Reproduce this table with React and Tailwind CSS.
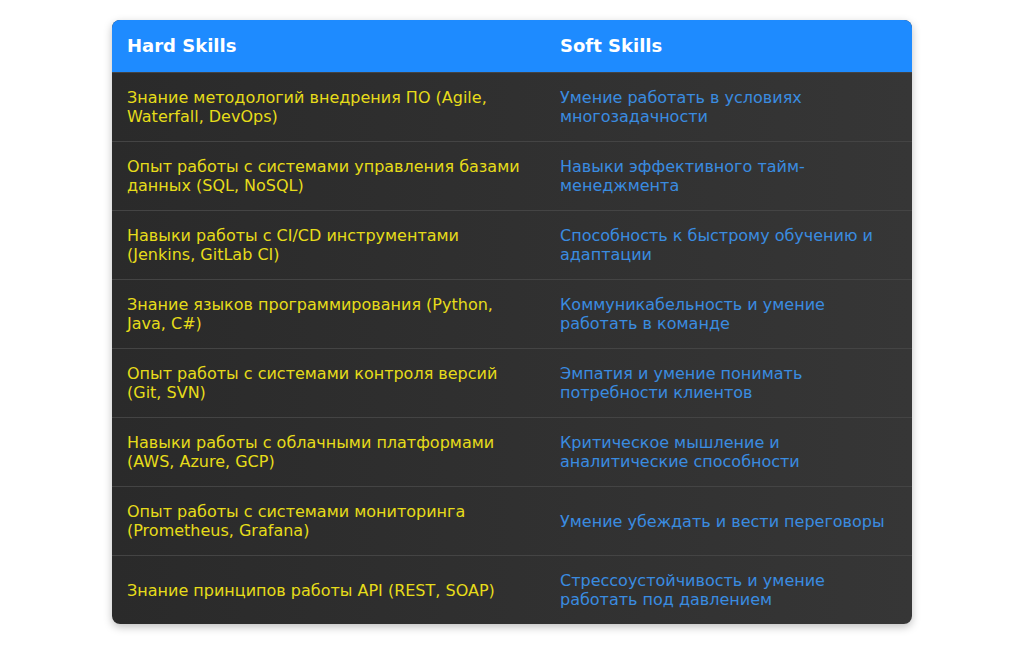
import React from "react";

const rows = [
  ["Знание методологий внедрения ПО (Agile, Waterfall, DevOps)", "Умение работать в условиях многозадачности"],
  ["Опыт работы с системами управления базами данных (SQL, NoSQL)", "Навыки эффективного тайм-менеджмента"],
  ["Навыки работы с CI/CD инструментами (Jenkins, GitLab CI)", "Способность к быстрому обучению и адаптации"],
  ["Знание языков программирования (Python, Java, C#)", "Коммуникабельность и умение работать в команде"],
  ["Опыт работы с системами контроля версий (Git, SVN)", "Эмпатия и умение понимать потребности клиентов"],
  ["Навыки работы с облачными платформами (AWS, Azure, GCP)", "Критическое мышление и аналитические способности"],
  ["Опыт работы с системами мониторинга (Prometheus, Grafana)", "Умение убеждать и вести переговоры"],
  ["Знание принципов работы API (REST, SOAP)", "Стрессоустойчивость и умение работать под давлением"],
];

export default function App() {
  return (
    <div className="min-h-[645px] bg-white pt-5 font-['DejaVu_Sans',sans-serif]">
      <div className="mx-auto w-[800px] overflow-hidden rounded-lg bg-gradient-to-r from-[#2a2a2a] to-[#363636] shadow-[0_3px_8px_rgba(0,0,0,0.25)]">
        <div className="grid grid-cols-[433px_367px] bg-[#1e8bff] text-[18px] font-bold leading-[21px] text-white">
          <div className="px-[15px] pt-[15px] pb-[16px]">Hard Skills</div>
          <div className="px-[15px] pt-[15px] pb-[16px]">Soft Skills</div>
        </div>
        {rows.map(([a, b], i) => (
          <div
            key={i}
            className="grid grid-cols-[433px_367px] items-center border-t border-[#444444] text-[16px] leading-[19px]"
          >
            <div className="px-[15px] py-[15px] text-[#e6dc1a]">{a}</div>
            <div className="px-[15px] py-[15px] text-[#3a8ce0]">{b}</div>
          </div>
        ))}
      </div>
    </div>
  );
}
